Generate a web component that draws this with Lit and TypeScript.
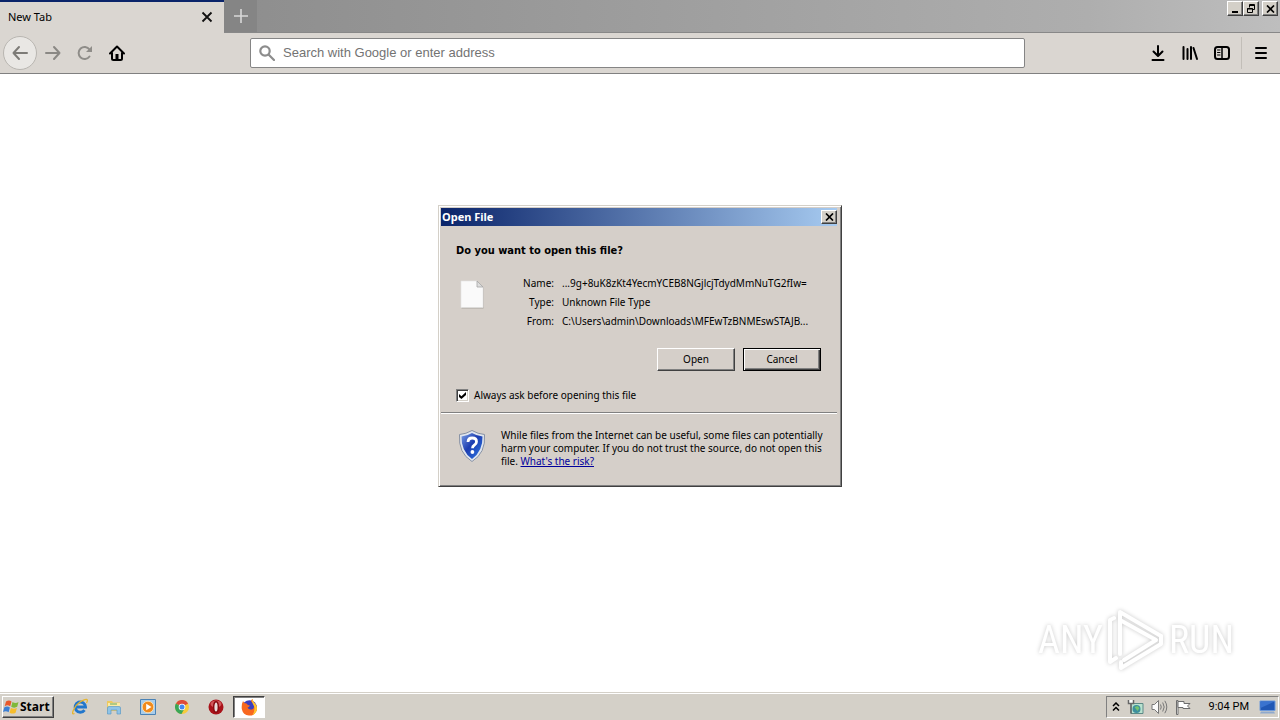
import { LitElement, html, css, svg } from "lit";
import { customElement, state } from "lit/decorators.js";

const closeGlyph = html`<svg width="9" height="8" viewBox="0 0 9 8"><path d="M1 .5l7 7M8 .5l-7 7" stroke="#000" stroke-width="1.7" /></svg>`;

const stroke = (body: unknown, color = "#000") =>
  html`<svg width="16" height="16" viewBox="0 0 16 16" fill="none" stroke=${color} stroke-width="2" stroke-linecap="round" stroke-linejoin="round">${body}</svg>`;

const icons = {
  back: stroke(svg`<path d="M15 8H1.500M7 2L1.500 8L7 14" />`, "#7d7b77"),
  forward: stroke(svg`<path d="M1 8h13.500M9 2l5.500 6L9 14" />`, "#8a8884"),
  reload: stroke(svg`<path d="M12.500 11.500A6 6 0 1 1 12.500 4.500" /><path d="M15 1v6H9z" fill="#8f8d89" stroke="none" />`, "#8f8d89"),
  home: stroke(svg`<path d="M1 8.500L8 1.500L15 8.500M3 8v5.500q0 1.500 1.500 1.500h7q1.500 0 1.500-1.500V8" /><path d="M6.500 9h3v5h-3z" fill="#000" stroke="none" />`),
  download: stroke(svg`<path d="M8 1v9.500M3.500 6.500L8 11l4.500-4.500M2.500 15h11" />`),
  library: stroke(svg`<path d="M1.500 2v12M5.500 4v10M9 2v12M11.500 3L15 14" />`),
  sidebar: stroke(svg`<rect x="1" y="2" width="14" height="12" rx="2.500" /><path d="M8 2v12" stroke-width="1.500" /><path d="M3.500 5H6M3.500 7.500H6M3.500 10H6" stroke-width="1" />`),
  menu: stroke(svg`<path d="M3 3h10M3 8h10M3 13h10" />`),
};

@customElement("browser-chrome")
export class BrowserChrome extends LitElement {
  static styles = css`
    :host { display: block; font-family: "Liberation Sans", sans-serif; }
    * { box-sizing: border-box; }
    svg { display: block; }
    button { padding: 0; border: 0; background: none; display: grid; place-items: center; }
    .strip { display: flex; height: 33px; background: linear-gradient(90deg, #858585, #aeaeae 85%, #bebebe); border-bottom: 1px solid #888; }
    .tab { width: 224px; height: 33px; border-top: 2px solid #0a246a; background: #dad6d1; display: flex; align-items: center; justify-content: space-between; padding: 0 11px 2px 8px; font: 11px/14px "Noto Sans", sans-serif; }
    .new { width: 33px; height: 32px; background: #858585; }
    .controls { margin-left: auto; display: flex; padding: 1px 2px 0 0; }
    .win { width: 16px; height: 15px; background: #d4d0c8; border: 1px solid; border-color: #fff #404040 #404040 #fff; box-shadow: inset -1px -1px #808080; }
    .shut { margin-left: 3px; }
    .bar { display: flex; align-items: center; height: 41px; background: #dad6d1; border-bottom: 1px solid #808080; padding: 0 3px; }
    .tool { width: 32px; height: 32px; }
    .back { width: 34px; height: 34px; border: 1px solid #b9b6b1; border-radius: 50%; background: #e9e7e4; }
    .gap { flex: 117 1 0; }
    .url { flex: 757 1 0; height: 30px; display: flex; align-items: center; gap: 8px; background: #fff; border: 1px solid #858585; border-radius: 2px; padding: 0 8px; }
    .field { flex: 1; min-width: 0; border: 0; outline: 0; padding: 0; background: none; font: 13px/16px "Liberation Sans", sans-serif; }
    .field::placeholder { color: #737373; opacity: 1; }
    .sep { width: 1px; height: 32px; background: #c2beb8; margin: 0 3px; }
  `;

  render() {
    return html`
      <div class="strip">
        <div class="tab">
          <span>New Tab</span>
          <button aria-label="Close tab"><svg width="12" height="12" viewBox="0 0 12 12"><path d="M1.500 1.500l9 9M10.500 1.500l-9 9" stroke="#111" stroke-width="1.800" /></svg></button>
        </div>
        <button class="new" aria-label="Open a new tab"><svg width="14" height="14" viewBox="0 0 14 14"><path d="M7 0v14M0 7h14" stroke="#d8d8d8" stroke-width="1.600" /></svg></button>
        <div class="controls">
          <button class="win" aria-label="Minimize"><svg width="9" height="9" viewBox="0 0 9 9"><path d="M1 7h6v2H1z" /></svg></button>
          <button class="win" aria-label="Restore"><svg width="10" height="10" viewBox="0 0 10 10" fill="none" stroke="#000"><path d="M3.500 3.500v-3h5v5h-2M3 1.500h6M1.500 4.500h5v4h-5zM1 5h6" /></svg></button>
          <button class="win shut" aria-label="Close">${closeGlyph}</button>
        </div>
      </div>
      <div class="bar">
        <button class="back" aria-label="Back">${icons.back}</button>
        <button class="tool" aria-label="Forward">${icons.forward}</button>
        <button class="tool" aria-label="Reload">${icons.reload}</button>
        <button class="tool" aria-label="Home">${icons.home}</button>
        <div class="gap"></div>
        <div class="url">
          <svg width="16" height="16" viewBox="0 0 16 16" fill="none" stroke="#8c8c8c" stroke-width="2.200"><circle cx="6" cy="6" r="4.700" /><path d="M9.500 9.500l5.500 5.500" stroke-linecap="round" /></svg>
          <input class="field" type="text" aria-label="Address" placeholder="Search with Google or enter address" />
        </div>
        <div class="gap"></div>
        <button class="tool" aria-label="Downloads">${icons.download}</button>
        <button class="tool" aria-label="Library">${icons.library}</button>
        <button class="tool" aria-label="Sidebars">${icons.sidebar}</button>
        <div class="sep"></div>
        <button class="tool" aria-label="Menu">${icons.menu}</button>
      </div>
    `;
  }
}

@customElement("open-file-dialog")
export class OpenFileDialog extends LitElement {
  static styles = css`
    :host { display: block; font: 10px/13px "Noto Sans", sans-serif; color: #000; }
    * { box-sizing: border-box; }
    svg { display: block; }
    .frame { background: #d5cfc9; border: 1px solid; border-color: #d4d0c8 #404040 #404040 #d4d0c8; box-shadow: inset 1px 1px #fff, inset -1px -1px #808080; padding: 2px 4px 2px 2px; }
    .title { height: 18px; display: flex; align-items: center; justify-content: space-between; padding: 0 0 0 1px; color: #fff; background: linear-gradient(90deg, #0a246a, #a6caf0); font: bold 11px/14px "Noto Sans", sans-serif; }
    .x { width: 16px; height: 14px; padding: 0; display: grid; place-items: center; background: #d4d0c8; border: 1px solid; border-color: #fff #404040 #404040 #fff; box-shadow: inset -1px -1px #808080; }
    .body { padding: 17px 16px 10px 15px; }
    .ask { margin: 0; font: bold 11px/16px "DejaVu Sans Condensed", "Noto Sans", sans-serif; }
    .info { display: flex; margin-top: 15px; }
    .doc { flex: none; width: 62px; padding: 6px 0 0 4px; }
    .facts { flex: 1; min-width: 0; display: grid; grid-template-columns: 36px 1fr; column-gap: 8px; row-gap: 0; margin: 0; line-height: 19px; }
    .key { text-align: right; }
    .val { margin: 0; white-space: nowrap; }
    .actions { display: flex; justify-content: flex-end; gap: 8px; margin-top: 17px; }
    .btn { width: 78px; height: 23px; padding: 0 0 1px; font: inherit; color: #000; background: #d5cfc9; border: 1px solid; border-color: #fff #404040 #404040 #fff; box-shadow: inset -1px -1px #808080; }
    .main { border-color: #000; box-shadow: inset 1px 1px #fff, inset -1px -1px #404040, inset -2px -2px #808080; }
    .always { display: flex; align-items: center; gap: 5px; margin-top: 18px; }
    .box { appearance: none; width: 13px; height: 13px; margin: 0; background: #fff; border: 1px solid; border-color: #808080 #fff #fff #808080; box-shadow: inset 1px 1px #404040, inset -1px -1px #d4d0c8; display: grid; place-items: center; }
    .box:checked::after { content: ""; width: 7px; height: 7px; background: #000; clip-path: polygon(0 30%, 35% 62%, 100% 0, 100% 42%, 35% 100%, 0 72%); }
    .note { display: flex; gap: 15px; padding: 16px 12px 16px 17px; border-top: 1px solid #808080; box-shadow: inset 0 1px #fff; }
    .shield { flex: none; }
    .text { margin: 0; }
    .risk { color: #00009c; }
  `;

  @state() private always = true;

  render() {
    return html`
      <section class="frame" role="dialog" aria-labelledby="t">
        <div class="title"><span id="t">Open File</span><button class="x" aria-label="Close">${closeGlyph}</button></div>
        <div class="body">
          <h2 class="ask">Do you want to open this file?</h2>
          <div class="info">
            <div class="doc">
              <svg width="26" height="30" viewBox="0 0 26 30"><path d="M1.500 1.500h16l6 6v21h-22z" fill="#aaa69f" /><path d="M1 1h16l6 6v20.500H1z" fill="#fafafa" stroke="#e4e4e4" stroke-width=".6" /><path d="M17 1v6h6z" fill="#dedede" stroke="#a5a5a5" stroke-width=".8" /></svg>
            </div>
            <dl class="facts">
              <dt class="key">Name:</dt><dd class="val">...9g+8uK8zKt4YecmYCEB8NGjlcjTdydMmNuTG2fIw=</dd>
              <dt class="key">Type:</dt><dd class="val">Unknown File Type</dd>
              <dt class="key">From:</dt><dd class="val">C:\\Users\\admin\\Downloads\\MFEwTzBNMEswSTAJB...</dd>
            </dl>
          </div>
          <div class="actions"><button class="btn">Open</button><button class="btn main">Cancel</button></div>
          <label class="always"><input class="box" type="checkbox" .checked=${this.always} @change=${(e: Event) => (this.always = (e.target as HTMLInputElement).checked)} />Always ask before opening this file</label>
        </div>
        <div class="note">
          <svg class="shield" width="28" height="34" viewBox="0 0 28 34">
            <defs><linearGradient id="sh" x2="1" y2="1"><stop stop-color="#7a9fe6" /><stop offset=".45" stop-color="#1c3db0" /><stop offset="1" stop-color="#2f7be6" /></linearGradient></defs>
            <path d="M14 1.500Q20 5 26.500 5.500Q28 24 14 32.500Q0 24 1.500 5.500Q8 5 14 1.500z" fill="#dfe5ee" stroke="#8791a3" />
            <path d="M14 4Q19 7 24.500 7.500Q25 22 14 30Q3 22 3.500 7.500Q9 7 14 4z" fill="url(#sh)" />
            <path d="M10 13q.2-4 4.200-4q4.300 0 4.300 3.700q0 2.200-2.300 3.600q-1.700 1-1.700 2.900" fill="none" stroke="#fff" stroke-width="2.800" /><circle cx="14.400" cy="23" r="1.900" fill="#fff" />
          </svg>
          <p class="text">While files from the Internet can be useful, some files can potentially harm your computer. If you do not trust the source, do not open this file. <a class="risk" href="#">What's the risk?</a></p>
        </div>
      </section>
    `;
  }
}

@customElement("task-bar")
export class TaskBar extends LitElement {
  static styles = css`
    :host { display: block; font: 11px/14px "Roboto", sans-serif; }
    * { box-sizing: border-box; }
    svg { display: block; }
    button { padding: 0; border: 0; background: none; display: grid; place-items: center; color: #000; }
    .bar { height: 28px; display: flex; align-items: center; background: #d4d0c8; border-top: 1px solid #d4d0c8; box-shadow: inset 0 1px #fff; padding: 2px 1px 1px 2px; }
    .start { width: 52px; height: 22px; display: flex; align-items: center; justify-content: flex-start; gap: 0; border: 1px solid; border-color: #fff #404040 #404040 #fff; box-shadow: inset -1px -1px #808080; font: bold 12px/14px "Open Sans", sans-serif; }
    .apps { display: flex; margin-left: 9px; }
    .app { width: 34px; height: 22px; }
    .on { width: 32px; background: #fff; border: 1px solid; border-color: #404040 #fff #fff #404040; box-shadow: inset 1px 1px #808080; }
    .tray { margin-left: auto; height: 22px; display: flex; align-items: center; gap: 7px; padding: 0 2px 0 5px; border: 1px solid; border-color: #808080 #fff #fff #808080; }
    .clock { padding: 0 3px 0 11px; }
  `;

  render() {
    return html`
      <footer class="bar">
        <button class="start">
          <svg width="17" height="16" viewBox="0 0 17 16"><path d="M3 2.500Q6 .5 8.500 2.500L7.200 7.300Q4.500 5.500 1.700 7.200z" fill="#e8582b" /><path d="M9.500 3Q12.500 4.800 15.500 3L14.200 7.800Q11.500 9.500 8.200 7.700z" fill="#7fb83a" /><path d="M1.400 8.300Q4.300 6.700 6.900 8.500L5.600 13.300Q3 11.500 0 13z" fill="#3b7fd4" /><path d="M7.900 9Q11 10.500 13.900 9L12.600 13.700Q9.500 15.500 6.600 13.700z" fill="#f6bd2c" /></svg>
          Start
        </button>
        <div class="apps">
          <button class="app" aria-label="Internet Explorer"><svg width="18" height="18" viewBox="0 0 18 18" fill="none"><path d="M13.500 12.200A5.200 5.200 0 1 1 14.500 9H5" stroke="#2277cc" stroke-width="3" /><path d="M3.500 15.500C-1 18 3 8 9 4C15 0 18 .5 15.500 5" stroke="#e6b52e" stroke-width="1.300" /></svg></button>
          <button class="app" aria-label="Explorer"><svg width="16" height="16" viewBox="0 0 16 16"><path d="M1 2h5l1 1.500h7V12H1z" fill="#eec95f" /><path d="M2 4h12v7H2z" fill="#fbeaa6" /><path d="M4 4.500h7v1H4z" fill="#65aa5f" /><path d="M1.500 15V9Q1.500 7.500 3 7.500h10q1.500 0 1.500 1.500v6H11v-4H5v4z" fill="#8fc4e8" stroke="#5c9bc7" stroke-width=".7" /></svg></button>
          <button class="app" aria-label="Media Player"><svg width="16" height="16" viewBox="0 0 16 16"><path d="M.5.5h15v15H.5z" fill="#a9cdea" stroke="#4a82b5" /><circle cx="8" cy="8" r="5.800" fill="#f08a1c" stroke="#fbd9a6" /><path d="M6.200 4.700L11.500 8l-5.300 3.300z" fill="#fff" /></svg></button>
          <button class="app" aria-label="Chrome"><svg width="14" height="14" viewBox="0 0 14 14"><circle cx="7" cy="7" r="7" fill="#f7cb3c" /><path d="M7 7L.9 3.500A7 7 0 0 1 13.100 3.500z" fill="#de4a3b" /><path d="M7 7L.9 3.500A7 7 0 0 0 6.500 14L9.500 8.500z" fill="#3aa657" /><circle cx="7" cy="7" r="3.300" fill="#fff" /><circle cx="7" cy="7" r="2.500" fill="#4587f0" /></svg></button>
          <button class="app" aria-label="Opera"><svg width="16" height="16" viewBox="0 0 16 16"><circle cx="8" cy="8" r="7.500" fill="#a91219" /><ellipse cx="8" cy="5" rx="5.500" ry="3.500" fill="#d2585b" /><ellipse cx="8" cy="8" rx="2.300" ry="5.200" fill="#e9dfdc" stroke="#86080d" stroke-width="1.400" /></svg></button>
          <button class="app on" aria-label="Firefox"><svg width="17" height="17" viewBox="0 0 17 17"><circle cx="8.500" cy="8.500" r="7.300" fill="#3a3fc0" /><path d="M2 2Q3 4.500 5.500 4.500Q6.500 6.500 9 6.500Q8 8.500 6.500 8.500Q8 11.500 12 10Q14 8 12 4Q11 3 10 2.500Q10 .8 11.500 0Q12 3 14 4.500Q17 8 15.500 12Q13 17 8 16.500Q2 16 .8 10Q.3 5.500 2 2z" fill="#f8681f" /><path d="M11.500 0Q12 3 14 4.500Q17 8 15.500 12Q14 15 11.500 16Q14.500 11 13 7Q10 3 11.500 0z" fill="#ffc52d" /></svg></button>
        </div>
        <div class="tray">
          <button aria-label="Show hidden icons"><svg width="8" height="10" viewBox="0 0 8 10" fill="none" stroke="#000" stroke-width="1.500"><path d="M1 4l3-3l3 3M1 8.500l3-3l3 3" /></svg></button>
          <svg width="17" height="16" viewBox="0 0 17 16"><path d="M4 4.500h12v10H4z" fill="#b9e2cf" stroke="#5d8a87" /><circle cx="9.500" cy="10" r="4" fill="#3d8f9d" /><path d="M7.500 8l3-1 2 2-2 3z" fill="#75c46e" /><path d="M1.500 1v3.500h5V1M4 4.500v10" stroke="#666" stroke-width="1.500" fill="#fff" /></svg>
          <svg width="17" height="16" viewBox="0 0 17 16" fill="none" stroke="#777"><path d="M1 5.500h2.500l4-4v13l-4-4H1z" fill="#fafafa" /><path d="M9.500 5.500q1.500 2.500 0 5M11.700 3.500q3 4.500 0 9M13.800 1.800q4 6.200 0 12.400" /></svg>
          <svg width="16" height="16" viewBox="0 0 16 16" fill="#fff" stroke="#6d6d6d"><path d="M1.500 1.500h1.500v14H1.500z" /><path d="M3 2.500h6v2h6L12.500 7L15 9.500H8v-1H3z" /></svg>
          <span class="clock">9:04 PM</span>
          <svg width="17" height="14" viewBox="0 0 17 14"><path d="M1 1h15v9.500H1z" fill="#2158b5" stroke="#6f9bdb" /><path d="M1.500 1.500h14L1.500 8z" fill="#3a73cf" /><path d="M2 11.500h13l1 2H1z" fill="#8fa9cd" /></svg>
        </div>
      </footer>
    `;
  }
}

@customElement("app-root")
export class AppRoot extends LitElement {
  static styles = css`
    :host { display: flex; flex-direction: column; height: 100vh; background: #fff; position: relative; overflow: hidden; }
    .page { flex: 1; min-height: 0; }
    .dialog { position: absolute; top: 205px; left: calc(50% - 202px); width: 404px; }
    .mark { position: absolute; right: 46px; bottom: 48px; display: flex; align-items: center; gap: 4px; color: #fff; font: 38px/60px "Roboto Condensed", "Liberation Sans Narrow", "Roboto", sans-serif; filter: drop-shadow(0 0 2px #c8c8c8); }
  `;

  render() {
    return html`
      <browser-chrome></browser-chrome>
      <main class="page"></main>
      <open-file-dialog class="dialog"></open-file-dialog>
      <div class="mark">
        <span>ANY</span>
        <svg width="58" height="64" viewBox="0 0 58 64" fill="none" stroke="#fff" stroke-width="4" stroke-linejoin="round" stroke-linecap="round"><path d="M13 46V4L54 28M13 4v8l36 20L17 52" /><path d="M7 10L3 12v42l6-4M14 60L54 36v-8M14 60v-6" /></svg>
        <span>RUN</span>
      </div>
      <task-bar></task-bar>
    `;
  }
}
